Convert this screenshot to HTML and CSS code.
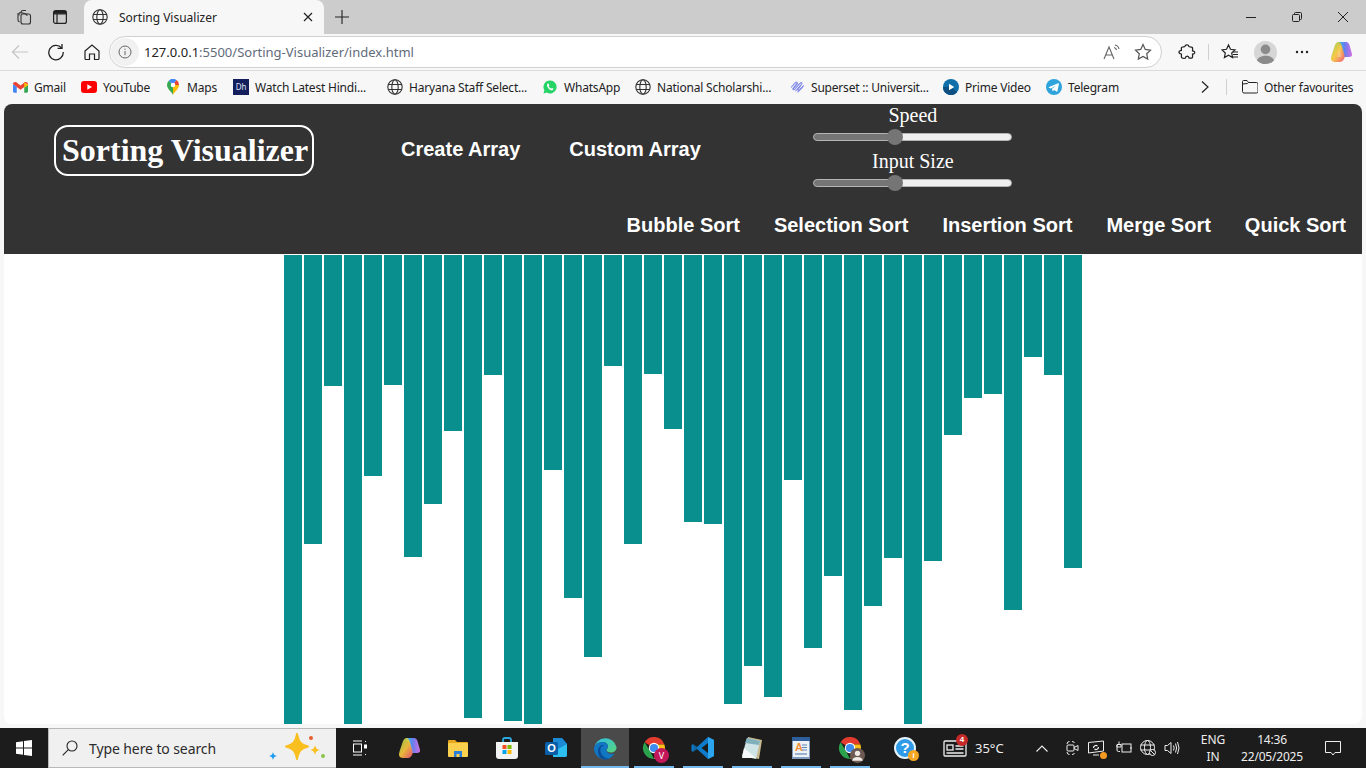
FILE: index.html
```html
<!DOCTYPE html>
<html lang="en">
<head>
  <meta charset="UTF-8">
  <meta name="viewport" content="width=device-width, initial-scale=1.0">
  <title>Sorting Visualizer</title>
  <link rel="stylesheet" href="styles.css">
</head>
<body>
  <svg class="defs" width="0" height="0">
    <defs>
      <symbol id="globe" viewBox="0 0 16 16">
        <g fill="none" stroke="#333" stroke-width="1.1">
          <circle cx="8" cy="8" r="7.2"/>
          <ellipse cx="8" cy="8" rx="3.2" ry="7.2"/>
          <path d="M1.2 5.5h13.6M1.2 10.5h13.6"/>
        </g>
      </symbol>
      <symbol id="chrome" viewBox="0 0 24 24">
        <path d="M12 12L2.6 6.2A11 11 0 0 1 22.4 8.5H12z" fill="#e33b2e"/>
        <path d="M12 23A11 11 0 0 1 2.6 6.2L8 15z" fill="#2ba24c"/>
        <path d="M22.4 8.5A11 11 0 0 1 12 23L16.5 14.5 12 8.5z" fill="#fbc116"/>
        <circle cx="12" cy="12" r="5.2" fill="#fff"/>
        <circle cx="12" cy="12" r="4.1" fill="#3f8cf0"/>
      </symbol>
    </defs>
  </svg>

  <div class="tabstrip">
    <div class="tab-tools">
      <svg class="ico16" viewBox="0 0 16 16" fill="none" stroke="#333" stroke-width="1.1"><path d="M5 4.5V3.2C5 2 6 1.5 7 1.5h3M3 6.5V5.2C3 4 4 3.2 5 3.5l5 1.5c1 .3 1 1 1 2"/><rect x="5" y="5" width="9.5" height="10" rx="2"/><path d="M2 4v7c0 1 .6 1.6 1.5 2"/></svg>
      <svg class="ico16" viewBox="0 0 16 16" fill="none" stroke="#222" stroke-width="1.2"><rect x="1.6" y="1.6" width="12.8" height="12.8" rx="2"/><path d="M1.6 4.8h12.8M5 4.8v9.6"/><path d="M2 2h12v2.6H2z" fill="#222" stroke="none"/></svg>
    </div>
    <div class="tab">
      <svg class="ico16"><use href="#globe"/></svg>
      <span class="tab-title">Sorting Visualizer</span>
      <svg class="tab-close" viewBox="0 0 10 10" stroke="#222" stroke-width="1.2"><path d="M1 1l8 8M9 1l-8 8"/></svg>
    </div>
    <svg class="tab-new" viewBox="0 0 14 14" stroke="#222" stroke-width="1.1"><path d="M7 0v14M0 7h14"/></svg>
    <div class="win-controls">
      <svg viewBox="0 0 10 10" stroke="#222"><path d="M0 5.5h10"/></svg>
      <svg viewBox="0 0 10 10" fill="none" stroke="#222"><rect x=".5" y="2.5" width="7" height="7" rx="1"/><path d="M2.5 2.5V1.5q0-1 1-1h5q1 0 1 1v5q0 1-1 1h-1"/></svg>
      <svg viewBox="0 0 10 10" stroke="#222"><path d="M0 0l10 10M10 0L0 10"/></svg>
    </div>
  </div>

  <div class="toolbar">
    <svg class="tool first" viewBox="0 0 18 18" fill="none" stroke="#c4c4c4" stroke-width="1.2"><path d="M17 9H1.5M8 2.5L1.5 9 8 15.5"/></svg>
    <svg class="tool" viewBox="0 0 18 18" fill="none" stroke="#222" stroke-width="1.3"><path d="M14.6 5A7.2 7.2 0 1 0 16.2 9"/><path d="M15 1v4.4h-4.4"/></svg>
    <svg class="tool" viewBox="0 0 18 18" fill="none" stroke="#222" stroke-width="1.2"><path d="M2 8l7-6 7 6v7.5a1 1 0 0 1-1 1h-3.5V11h-5v5.5H3a1 1 0 0 1-1-1z"/></svg>
    <div class="address">
      <span class="info"><svg viewBox="0 0 14 14" fill="none" stroke="#666"><circle cx="7" cy="7" r="6"/><path d="M7 6v4.2M7 3.6v1.2"/></svg></span>
      <span class="url"><b>127.0.0.1</b>:5500/Sorting-Visualizer/index.html</span>
      <svg class="addr-ico read" viewBox="0 0 18 16" fill="none" stroke="#666" stroke-width="1.1"><path d="M1 15L6 3l5 12M2.8 11h6.4"/><path d="M11 3.5c1.5.3 2.2 1.2 2.6 2.5M12 1c2.5.4 3.6 2 4 4"/></svg>
      <svg class="addr-ico" viewBox="0 0 18 18" fill="none" stroke="#555" stroke-width="1.2"><path d="M9 1.5l2.3 4.9 5.2.7-3.8 3.6 1 5.3L9 13.4l-4.7 2.6 1-5.3-3.8-3.6 5.2-.7z"/></svg>
    </div>
    <div class="tool-right">
      <svg class="tool-r ext" viewBox="0 0 18 18" fill="none" stroke="#222" stroke-width="1.3"><path d="M7 3.5a2.2 2.2 0 0 1 4.300 0c0 .5 3.700-.5 3.700 1.500v3c1.800 0 2.500 1 2.200 2-.3 1-1.200 1.300-2.200 1.200v3c0 1.500-1.500 1.300-3.500 1.300-.2-1.600-1-2.200-2-2.200s-1.800.8-2 2.200c-3 .3-4.200-.2-4-2 .2-1.500 0-2 0-2.300-2-.2-2.500-1-2.500-2s1-1.800 2.500-1.700V5C3 3.500 6.800 4.200 7 3.500z" transform="translate(0 .2) scale(.97)"/></svg>
      <span class="tool-sep"></span>
      <svg class="tool-r fav" viewBox="0 0 18 18" fill="none" stroke="#222" stroke-width="1.2"><path d="M7.500 2l2 4.300 4.500.6-3.300 3.100.9 4.600-4.100-2.300-4.100 2.300.9-4.600L1 6.900l4.500-.6z"/><path d="M12 9h5M12 11.500h5M11 14h6"/></svg>
      <span class="avatar"><svg viewBox="0 0 22 22" fill="#8b8b8b"><circle cx="11" cy="8" r="4.600"/><path d="M2.500 20c.5-4 4-6 8.500-6s8 2 8.500 6a11 11 0 0 1-17 0z"/></svg></span>
      <svg class="tool-r more" viewBox="0 0 14 4" fill="#222"><circle cx="2" cy="2" r="1.200"/><circle cx="7" cy="2" r="1.200"/><circle cx="12" cy="2" r="1.200"/></svg>
      <svg class="copilot" viewBox="0 0 24 24"><use href="#copilot-shape"/>
        <defs><linearGradient id="cpa" x1="0" y1="0" x2="1" y2="0"><stop offset="0" stop-color="#27c3e8"/><stop offset=".5" stop-color="#6a7df0"/><stop offset="1" stop-color="#d56fe0"/></linearGradient><linearGradient id="cpb" x1="0" y1="0" x2="1" y2="1"><stop offset="0" stop-color="#8ed04e"/><stop offset=".5" stop-color="#f7c43b"/><stop offset="1" stop-color="#f0517a"/></linearGradient></defs>
        <path d="M9 2h8c2 0 3 1.500 3.500 3l2.500 9c.5 2-1 3-3 3h-5L12 7c-.6-1.800-2-2-3-2z" fill="url(#cpa)"/>
        <path d="M6 5c1-2 2-3 3.500-3S12 3.500 12.500 5l3 10c.6 2 0 3-.5 4-1 2-2.500 3-4 3H6c-2 0-4-1-4-3s.5-3 1-5z" fill="url(#cpb)" opacity=".93"/>
        <path d="M9.500 10c1 0 1.500 1 1.800 2l1.500 5H8l1.500-5z" fill="#fff" opacity=".25"/>
      </svg>
    </div>
  </div>

  <div class="bookmarks">
    <span class="bm bm-gmail"><svg viewBox="0 0 16 12"><path d="M1 12V2l7 5.500L15 2v10h-3V6L8 9 4 6v6z" fill="#e8e8e8"/><path d="M0 3c0-2 2-3 3.500-2L8 4.500 12.500 1C14 0 16 1 16 3l-4 3-4 3-4-3z" fill="#ea4335"/><path d="M0 3v7.500C0 11.500.5 12 1.500 12H4V6z" fill="#4285f4"/><path d="M16 3v7.500c0 1-.5 1.500-1.500 1.500H12V6z" fill="#34a853"/><path d="M12 1.200L16 3v1l-4 3z" fill="#fbbc05"/></svg>Gmail</span>
    <span class="bm bm-yt"><svg viewBox="0 0 16 12"><rect width="16" height="12" rx="3" fill="#f00"/><path d="M6.300 3.300v5.400L11 6z" fill="#fff"/></svg>YouTube</span>
    <span class="bm bm-maps"><svg viewBox="0 0 12 16"><path d="M6 16C5 13 0 10 0 6a6 6 0 0 1 2-4.500L6 6z" fill="#34a853"/><path d="M2 1.500A6 6 0 0 1 9.500 1L6 6z" fill="#4285f4"/><path d="M9.500 1A6 6 0 0 1 12 6L6 6z" fill="#ea4335"/><path d="M12 6c0 4-5 7-6 10L6 6z" fill="#fbbc05"/><circle cx="6" cy="6" r="2.300" fill="#fff"/></svg>Maps</span>
    <span class="bm bm-dh"><span class="dh-logo">Dh</span>Watch Latest Hindi...</span>
    <span class="bm bm-hssc"><svg class="ico16"><use href="#globe"/></svg>Haryana Staff Select...</span>
    <span class="bm bm-wa"><svg viewBox="0 0 14 14"><path d="M7 .5a6.500 6.500 0 0 0-5.600 9.800L.5 13.500l3.300-.9A6.500 6.500 0 1 0 7 .5z" fill="#25d366"/><path d="M4.800 3.600c-.9.500-1.200 2 0 3.800 1.200 1.900 3 3.100 4.400 2.800.8-.2 1.300-1 1.200-1.500L8.900 7.900l-.8.800c-.8-.2-2-1.400-2.400-2.400l.7-.7-.7-1.900c-.4-.2-.6-.2-.9-.1z" fill="#fff"/></svg>WhatsApp</span>
    <span class="bm bm-nsp"><svg class="ico16"><use href="#globe"/></svg>National Scholarshi...</span>
    <span class="bm bm-sup"><svg viewBox="0 0 14 12" fill="none" stroke="#7f88e8" stroke-width="1"><path d="M1 6l4-4.500c1-1 2-.5 1.500.5L3 7c-.5 1 .5 1.500 1.500.5l5-5.500c1-1 2-.5 1.500.5L7.500 7.500c-.7 1 .5 1.500 1.300.7L13 4"/><path d="M2.500 7.500L7.500 2M5 9.500L10 4M7 10.500l5-5"/></svg>Superset :: Universit...</span>
    <span class="bm bm-prime"><svg viewBox="0 0 16 16"><circle cx="8" cy="8" r="8" fill="#0f6fa8"/><path d="M0 8a8 8 0 0 0 14 5.300L8 8z" fill="#0c4f80"/><path d="M6 4.800v6.400L11.200 8z" fill="#fff"/></svg>Prime Video</span>
    <span class="bm bm-tg"><svg viewBox="0 0 16 16"><circle cx="8" cy="8" r="8" fill="#2fa3db"/><path d="M3 7.900l9.200-3.600c.5-.2.800.1.700.7l-1.500 7.200c-.1.500-.5.600-.9.400L8.200 11l-1.100 1.100c-.2.200-.4.200-.5 0L6 9.800l4.300-3.400-5.400 3L3 8.700c-.4-.2-.4-.6 0-.8z" fill="#fff"/></svg>Telegram</span>
    <svg class="bm-more" viewBox="0 0 8 12" fill="none" stroke="#222" stroke-width="1.2"><path d="M1 .5L7 6l-6 5.500"/></svg>
    <span class="bm-sep"></span>
    <span class="bm bm-other"><svg viewBox="0 0 16 14" fill="none" stroke="#222"><path d="M.5 11.500v-10q0-1 1-1h3.500l1.500 2h8q1.500 0 1.500 1.500v7.500q0 1.500-1.500 1.500H2q-1.500 0-1.500-1.500z"/><path d="M.5 4l5-.5 1-1"/></svg>Other favourites</span>
  </div>

  <main class="viewport">
    <header class="site-header">
      <div class="top-row">
        <h1 class="logo">Sorting Visualizer</h1>
        <a class="nav-link create" href="#">Create Array</a>
        <a class="nav-link custom" href="#">Custom Array</a>
        <div class="sliders">
          <label for="speed">Speed</label>
          <input id="speed" type="range" min="0" max="100" value="40">
          <label for="size">Input Size</label>
          <input id="size" type="range" min="0" max="100" value="40">
        </div>
      </div>
      <nav class="sort-row">
        <a class="nav-link" href="#">Bubble Sort</a>
        <a class="nav-link" href="#">Selection Sort</a>
        <a class="nav-link" href="#">Insertion Sort</a>
        <a class="nav-link" href="#">Merge Sort</a>
        <a class="nav-link" href="#">Quick Sort</a>
      </nav>
    </header>
    <section class="bars">
      <div class="bar" style="height:480px"></div>
      <div class="bar" style="height:289px"></div>
      <div class="bar" style="height:131px"></div>
      <div class="bar" style="height:480px"></div>
      <div class="bar" style="height:221px"></div>
      <div class="bar" style="height:130px"></div>
      <div class="bar" style="height:302px"></div>
      <div class="bar" style="height:249px"></div>
      <div class="bar" style="height:176px"></div>
      <div class="bar" style="height:463px"></div>
      <div class="bar" style="height:120px"></div>
      <div class="bar" style="height:466px"></div>
      <div class="bar" style="height:480px"></div>
      <div class="bar" style="height:215px"></div>
      <div class="bar" style="height:343px"></div>
      <div class="bar" style="height:402px"></div>
      <div class="bar" style="height:111px"></div>
      <div class="bar" style="height:289px"></div>
      <div class="bar" style="height:119px"></div>
      <div class="bar" style="height:174px"></div>
      <div class="bar" style="height:267px"></div>
      <div class="bar" style="height:269px"></div>
      <div class="bar" style="height:449px"></div>
      <div class="bar" style="height:411px"></div>
      <div class="bar" style="height:442px"></div>
      <div class="bar" style="height:225px"></div>
      <div class="bar" style="height:393px"></div>
      <div class="bar" style="height:321px"></div>
      <div class="bar" style="height:455px"></div>
      <div class="bar" style="height:351px"></div>
      <div class="bar" style="height:303px"></div>
      <div class="bar" style="height:480px"></div>
      <div class="bar" style="height:306px"></div>
      <div class="bar" style="height:180px"></div>
      <div class="bar" style="height:143px"></div>
      <div class="bar" style="height:139px"></div>
      <div class="bar" style="height:355px"></div>
      <div class="bar" style="height:102px"></div>
      <div class="bar" style="height:120px"></div>
      <div class="bar" style="height:313px"></div>
    </section>
  </main>

  <footer class="taskbar">
    <div class="start"><svg viewBox="0 0 16 16" fill="#fff"><path d="M0 2.300L7 1.300v6.300H0zM8 1.100L16 0v7.600H8zM0 8.500h7v6.300L0 13.800zM8 8.500h8V16l-8-1.100z"/></svg></div>
    <div class="search">
      <svg class="search-ico" viewBox="0 0 16 16" fill="none" stroke="#222" stroke-width="1.1"><circle cx="10" cy="6" r="5"/><path d="M6.300 9.700L.7 15.300"/></svg>
      <span class="search-text">Type here to search</span>
      <svg class="sparkle" viewBox="0 0 62 30">
        <path d="M32 1c1.500 8 4 11 11 12.500C36 15 33.500 18 32 26c-1.500-8-4-11-11-12.500C28 12 30.500 9 32 1z" fill="#f9bf1f" stroke="#f9bf1f" stroke-width="2" stroke-linejoin="round"/>
        <path d="M50 12c.6 3 1.800 4.400 5 5-3.200.6-4.400 2-5 5-.6-3-1.800-4.400-5-5 3.200-.6 4.400-2 5-5z" fill="#f9bf1f"/>
        <path d="M8 19c.4 2.500 1.500 3.400 4 4-2.500.5-3.600 1.500-4 4-.4-2.500-1.500-3.500-4-4 2.500-.6 3.600-1.500 4-4z" fill="#1f9cf0"/>
        <circle cx="46" cy="5" r="2" fill="#e8602c"/><circle cx="58" cy="23" r="2" fill="#8bc34a"/>
      </svg>
    </div>
    <div class="apps">
      <span class="app"><svg class="task-view" viewBox="0 0 16 16" fill="none" stroke="#fff"><path d="M1 1h9M1 15h9"/><rect x="1.500" y="4" width="8" height="8"/><rect x="12.500" y="5" width="2" height="3" fill="#fff"/><path d="M13.500 1v1M13.500 14v1"/></svg></span>
      <span class="app"><svg viewBox="0 0 24 24">
        <path d="M9 2h8c2 0 3 1.500 3.500 3l2.500 9c.5 2-1 3-3 3h-5L12 7c-.6-1.800-2-2-3-2z" fill="url(#cpa)"/>
        <path d="M6 5c1-2 2-3 3.500-3S12 3.500 12.500 5l3 10c.6 2 0 3-.5 4-1 2-2.500 3-4 3H6c-2 0-4-1-4-3s.5-3 1-5z" fill="url(#cpb)" opacity=".93"/></svg></span>
      <span class="app"><svg viewBox="0 0 24 24"><path d="M2 5q0-1 1-1h6l2 2h10q1 0 1 1v2H2z" fill="#e9a71c"/><rect x="2" y="7" width="20" height="14" rx="1" fill="#fbd04e"/><path d="M8 21v-6h8v6h-2.500v-3h-3v3z" fill="#2b7fd6"/></svg></span>
      <span class="app"><svg viewBox="0 0 24 24"><path d="M8 6V4q0-2 2-2h4q2 0 2 2v2" fill="none" stroke="#2aa8e0" stroke-width="1.800"/><path d="M1 6h22v14q0 3-3 3H4q-3 0-3-3z" fill="#f3f3f3"/><rect x="7.500" y="9" width="4" height="4" fill="#f25022"/><rect x="12.500" y="9" width="4" height="4" fill="#7fba00"/><rect x="7.500" y="14" width="4" height="4" fill="#00a4ef"/><rect x="12.500" y="14" width="4" height="4" fill="#ffb900"/></svg></span>
      <span class="app"><svg viewBox="0 0 24 24"><path d="M9 2h9l5 6v11q0 2-2 2H9z" fill="#0f6cbd"/><path d="M9 11l14-3v11q0 2-2 2H9z" fill="#2bc0f0"/><path d="M23 8L14 13 9 9V2h9z" fill="#1d8ad6"/><rect x="1" y="6" width="13" height="13" rx="1.500" fill="#0a5ea8"/><text class="o-letter" x="7.500" y="16.300">O</text></svg></span>
      <span class="app active"><svg viewBox="0 0 24 24"><defs><linearGradient id="edg" x1="0" y1="0" x2="1" y2="1"><stop offset="0" stop-color="#2fc0e8"/><stop offset="1" stop-color="#58d27a"/></linearGradient></defs><path d="M1 12A11.500 11.500 0 0 1 23.500 11c.2 3-2 5.500-5.500 5.500-2.500 0-4.500-1-4.500-2.500 0-1.500 1.500-1.500 1.500-3.500C15 7.500 12 5.500 8.500 6 4.500 6.500 1.500 9 1 12z" fill="url(#edg)"/><path d="M1 12C1.500 9 4.500 6.500 8.500 6 12 5.500 15 7.500 15 10.500c0 2-1.500 2-1.500 3.500 0 2 2 4 5 4 1 0 2-.2 3-.8A11.500 11.500 0 0 1 12 23.500 11 11 0 0 1 1 12z" fill="#1277c2"/><path d="M6 20C4 15 5 11 8 9.500c1.500-.7 2.500-.5 3 0-3 .3-4 3-3.500 6 .6 3.500 4 7 8.500 7.300-4 1.500-8 .5-10-2.800z" fill="#0b4d96"/></svg></span>
      <span class="app"><span class="badged"><svg viewBox="0 0 24 24"><use href="#chrome"/></svg><span class="badge-v">V</span></span></span>
      <span class="app"><svg viewBox="0 0 24 24"><path d="M17 1l6 3v16l-6 3L6 13l-4 3-1.500-1v-6L2 8l4 3z" fill="#0d7bc9"/><path d="M17 1l6 3v16l-6 3z" fill="#2aa5ee"/><path d="M17 7L10.500 12 17 17z" fill="#1c1c1c"/><path d="M1 9l1-1 4.500 4L2 16l-1-1 2.500-3z" fill="#1c1c1c" opacity=".25"/></svg></span>
      <span class="app"><svg viewBox="0 0 24 24"><path d="M8 1l14 3-3 19L3 20z" fill="#c9b98f"/><path d="M7 2l13 3-4 18L2 20z" fill="#cfe4e6"/><path d="M7 2l13 3-1 4L5 7z" fill="#7fb0bb"/><path d="M4 12l12 10H2z" fill="#f4f8f8"/></svg></span>
      <span class="app"><svg viewBox="0 0 24 24"><rect x="3" y="1" width="18" height="22" fill="#7f9cc0"/><rect x="4" y="3" width="16" height="18" fill="#eef2f7"/><rect x="3" y="1" width="18" height="4" fill="#2e5f9a"/><text class="a-letter" x="6" y="15">A</text><path d="M13 9h5M13 11.500h5M13 14h5" stroke="#5a86b5"/><path d="M6 18h12" stroke="#7f9cc0" stroke-width="1.500"/></svg></span>
      <span class="app"><span class="badged"><svg viewBox="0 0 24 24"><use href="#chrome"/></svg><span class="badge-user"><svg viewBox="0 0 14 14" fill="#f1e9e4"><circle cx="7" cy="5" r="2.500"/><path d="M2 12c.5-2.500 2.500-3.500 5-3.500s4.500 1 5 3.500z"/></svg></span></span></span>
    </div>
    <div class="tray">
      <span class="help"><span class="help-q">?</span><span class="help-i">i</span></span>
      <span class="news"><svg viewBox="0 0 24 18" fill="none" stroke="#eee" stroke-width="1.300"><rect x="1" y="2" width="22" height="15" rx="1"/><rect x="4" y="6" width="6" height="5"/><path d="M3.500 14h17M12.500 7h8M12.500 10h8"/></svg><span class="news-badge">4</span></span>
      <span class="temp">35°C</span>
      <svg class="caret" viewBox="0 0 12 7" fill="none" stroke="#eee" stroke-width="1.100"><path d="M.5 6.500L6 1l5.500 5.500"/></svg>
      <svg class="t-ico" viewBox="0 0 16 16" fill="none" stroke="#eee"><path d="M3 4q0-2.500 2.500-2.500M3 12q0 2.500 2.500 2.500M8 1.500q2 0 2.500 1.500M8 14.500q2 0 2.500-1.500"/><rect x="3" y="5" width="7" height="6" rx="1"/><path d="M10 7.500l4-2v5l-4-2"/></svg>
      <span class="t-box"><svg class="t-ico" viewBox="0 0 16 16" fill="none" stroke="#eee"><path d="M.5 2.500l15-1.500v10l-15 2zM5 15h6"/><path d="M5.500 8a2.500 2.500 0 0 1 4-2M10.500 7a2.500 2.500 0 0 1-4 2" stroke-width="1.200"/></svg><span class="t-dot"></span></span>
      <svg class="t-ico" viewBox="0 0 16 16" fill="none" stroke="#eee"><rect x="6" y="4" width="9" height="8"/><path d="M15 7v2M1 5v5q0 1.500 1.500 1.500H4M3 1.500v3M1 4.500h4v2.500H1z"/></svg>
      <svg class="t-ico" viewBox="0 0 16 16" fill="none" stroke="#eee"><circle cx="7.500" cy="7.500" r="7"/><ellipse cx="7.500" cy="7.500" rx="3" ry="7"/><path d="M.5 5h14M.5 10h14"/><circle cx="12.500" cy="12.500" r="3" fill="#1c1c1c"/><path d="M10.500 10.500l4 4"/></svg>
      <svg class="t-ico" viewBox="0 0 16 16" fill="none" stroke="#eee"><path d="M1 5.500h2.500L7 2.500v11l-3.500-3H1zM9.500 5.500q1.300 2.500 0 5M11.500 3.500q2.200 4.500 0 9M13.500 2q3 6 0 12"/></svg>
      <span class="lang">ENG<br>IN</span>
      <span class="clock">14:36<br>22/05/2025</span>
      <svg class="notif" viewBox="0 0 16 15" fill="none" stroke="#eee"><path d="M.5.500h15v11H10l-2 2.500-2-2.500H.5z"/></svg>
    </div>
  </footer>
</body>
</html>
```

FILE: styles.css
```css
* {
  box-sizing: border-box;
}
html, body {
  margin: 0;
  height: 100%;
}
body {
  width: 1366px;
  height: 768px;
  overflow: hidden;
  display: flex;
  flex-direction: column;
  background-color: #f7f7f7;
  font-family: "Noto Sans", "Open Sans", sans-serif;
  color: #222;
}
.defs {
  position: absolute;
}
svg {
  display: block;
  flex: none;
}
.ico16 {
  width: 16px;
  height: 16px;
}

/* browser tab strip */
.tabstrip {
  height: 34px;
  flex: none;
  display: flex;
  align-items: center;
  background-color: #cccccc;
}
.tab-tools {
  width: 84px;
  padding-left: 16px;
  display: flex;
  gap: 20px;
}
.tab {
  width: 240px;
  height: 34px;
  display: flex;
  align-items: center;
  padding: 0 11px 0 6px;
  background-color: #f7f7f7;
  border-radius: 8px 8px 0 0;
}
.tab .ico16 {
  margin-left: 2px;
}
.tab-title {
  margin-left: 11px;
  font-size: 12px;
  flex: 1;
}
.tab-close {
  width: 10px;
  height: 10px;
}
.tab-new {
  width: 14px;
  height: 14px;
  margin-left: 11px;
}
.win-controls {
  margin-left: auto;
  display: flex;
  gap: 36px;
  padding-right: 18px;
}
.win-controls svg {
  width: 10px;
  height: 10px;
}

/* address bar */
.toolbar {
  height: 36px;
  flex: none;
  display: flex;
  align-items: center;
  padding-left: 11px;
}
.tool {
  width: 18px;
  height: 18px;
  margin-right: 18px;
}
.address {
  width: 1053px;
  height: 32px;
  margin-left: -10px;
  display: flex;
  align-items: center;
  background-color: #fff;
  border: 1px solid #d0d0d0;
  border-radius: 16px;
}
.info {
  width: 28px;
  height: 28px;
  margin-left: 1px;
  display: flex;
  align-items: center;
  justify-content: center;
  background-color: #f1f1f1;
  border-radius: 50%;
}
.info svg {
  width: 14px;
  height: 14px;
}
.url {
  margin-left: 5px;
  flex: 1;
  font-size: 13px;
  color: #5f6b7a;
}
.url b {
  font-weight: 400;
  color: #222;
}
.addr-ico {
  width: 18px;
  height: 18px;
  margin-right: 9px;
}
.addr-ico.read {
  margin-right: 13px;
}
.tool-right {
  display: flex;
  align-items: center;
  padding-left: 16px;
}
.tool-r {
  width: 18px;
  height: 18px;
}
.tool-sep {
  width: 1px;
  height: 16px;
  margin: 0 12px 0 12px;
  background-color: #d0d0d0;
}
.avatar {
  width: 23px;
  height: 23px;
  margin-left: 15px;
  border-radius: 50%;
  background-color: #d6d6d6;
  overflow: hidden;
}
.avatar svg {
  width: 23px;
  height: 23px;
}
.tool-r.more {
  width: 14px;
  height: 4px;
  margin-left: 18px;
}
.copilot {
  width: 24px;
  height: 24px;
  margin-left: 20px;
}

/* bookmarks */
.bookmarks {
  height: 34px;
  flex: none;
  display: flex;
  align-items: center;
  border-top: 1px solid #dcdcdc;
  font-size: 12px;
  letter-spacing: -.2px;
  padding-left: 13px;
  padding-bottom: 1px;
}
.bm {
  display: flex;
  align-items: center;
  gap: 6px;
  white-space: nowrap;
}
.bm-gmail svg {
  width: 15px;
  height: 12px;
}
.bm-gmail {
  width: 68px;
}
.bm-yt svg {
  width: 16px;
  height: 12px;
}
.bm-yt {
  width: 86px;
}
.bm-maps svg {
  width: 12px;
  height: 16px;
}
.bm-maps {
  width: 66px;
  gap: 8px;
}
.bm-dh {
  width: 154px;
}
.dh-logo {
  width: 16px;
  height: 16px;
  background-color: #141e5c;
  color: #dfe3f5;
  font-size: 8px;
  line-height: 16px;
  text-align: center;
}
.bm-hssc {
  width: 156px;
}
.bm-wa svg {
  width: 14px;
  height: 14px;
}
.bm-wa {
  width: 92px;
  gap: 7px;
}
.bm-nsp {
  width: 155px;
}
.bm-sup svg {
  width: 15px;
  height: 13px;
}
.bm-sup {
  width: 153px;
}
.bm-prime svg, .bm-tg svg {
  width: 16px;
  height: 16px;
}
.bm-prime {
  width: 103px;
}
.bm-tg {
  width: 155px;
}
.bm-more {
  width: 8px;
  height: 12px;
}
.bm-sep {
  width: 1px;
  height: 16px;
  margin: 0 15px 0 17px;
  background-color: #d0d0d0;
}
.bm-other svg {
  width: 16px;
  height: 14px;
}

/* the page itself */
.viewport {
  height: 620px;
  flex: none;
  margin: 0 4px 4px;
  background-color: #fff;
  border-radius: 8px;
  overflow: hidden;
  font-family: "Liberation Serif", serif;
}
.site-header {
  height: 150px;
  background-color: #333333;
  color: #fff;
}
.top-row {
  height: 92px;
  display: flex;
  align-items: flex-start;
  padding-left: 50px;
}
.logo {
  margin: 21px 0 0;
  padding: 0 6px;
  height: 51px;
  width: 260px;
  line-height: 47px;
  font-size: 32px;
  font-weight: 700;
  white-space: nowrap;
  border: 2px solid #fff;
  border-radius: 14px;
}
.nav-link {
  color: #fff;
  font-family: "Liberation Sans", Arial, sans-serif;
  font-size: 20px;
  font-weight: 700;
  line-height: 23px;
  text-decoration: none;
}
.create {
  margin: 34px 0 0 87px;
}
.custom {
  margin: 34px 0 0 49px;
}
.sliders {
  width: 200px;
  margin-left: 112px;
  display: flex;
  flex-direction: column;
  align-items: center;
  font-size: 20px;
  line-height: 23px;
}
.sliders input {
  appearance: none;
  -webkit-appearance: none;
  display: block;
  width: 199px;
  height: 20px;
  margin: 0 0 3px;
  background: transparent;
}
.sliders input::-webkit-slider-runnable-track {
  height: 8px;
  border-radius: 4px;
  border: 1px solid #b4b4b4;
  background: linear-gradient(to right, #757575 41%, #efefef 41%);
}
.sliders input::-webkit-slider-thumb {
  -webkit-appearance: none;
  width: 16px;
  height: 16px;
  margin-top: -5px;
  border-radius: 50%;
  background-color: #757575;
}
.sort-row {
  display: flex;
  justify-content: flex-end;
  gap: 34px;
  padding: 18px 16px 0 0;
}

.bars {
  display: flex;
  justify-content: center;
  align-items: flex-start;
  gap: 2px;
  padding-top: 1px;
}
.bar {
  width: 18px;
  background-color: #0a8f8f;
}

/* windows taskbar */
.taskbar {
  height: 40px;
  flex: none;
  display: flex;
  align-items: stretch;
  background-color: #1c1c1c;
}
.start {
  width: 48px;
  display: flex;
  align-items: center;
  justify-content: center;
}
.start svg {
  width: 16px;
  height: 16px;
}
.search {
  width: 288px;
  display: flex;
  align-items: center;
  padding-left: 13px;
  background-color: #f0f0f0;
  border: 1px solid #b8b8b8;
  border-width: 1px 0 1px 1px;
}
.search-ico {
  width: 16px;
  height: 16px;
}
.search-text {
  margin-left: 11px;
  font-size: 14px;
  letter-spacing: -.1px;
  color: #2b2b2b;
  flex: 1;
}
.sparkle {
  width: 62px;
  height: 30px;
  margin-right: 9px;
}
.apps {
  display: flex;
  gap: 1px;
  padding-left: 0;
}
.app {
  width: 48px;
  display: flex;
  align-items: center;
  justify-content: center;
  position: relative;
}
.app::after {
  content: "";
  position: absolute;
  left: 4px;
  right: 4px;
  bottom: 0;
  height: 2px;
  background-color: #76b9ed;
}
.app:nth-child(-n+5)::after {
  display: none;
}
.app svg {
  width: 24px;
  height: 24px;
}
.app svg.task-view {
  width: 16px;
  height: 16px;
}
.app.active {
  background-color: #4a4a4a;
}
.app.active::after {
  left: 0;
  right: 0;
}
.o-letter {
  fill: #fff;
  font: 700 11px "Liberation Sans", sans-serif;
  text-anchor: middle;
}
.a-letter {
  fill: #f0913a;
  font: 700 11px "Liberation Sans", sans-serif;
}
.badged {
  position: relative;
  display: block;
  width: 24px;
  height: 24px;
}
.badge-v, .badge-user {
  position: absolute;
  right: -3px;
  bottom: -3px;
  width: 15px;
  height: 15px;
  border-radius: 50%;
  font-size: 9px;
  line-height: 15px;
  text-align: center;
  color: #fff;
}
.badge-v {
  background-color: #c2185b;
}
.badge-user {
  background-color: #6d5a52;
}
.app .badge-user svg {
  width: 15px;
  height: 15px;
}
.tray {
  margin-left: auto;
  display: flex;
  align-items: center;
  color: #eee;
  position: relative;
}
.help {
  position: relative;
  width: 22px;
  height: 22px;
  margin-right: 27px;
  border-radius: 50%;
  background-color: #2f9be8;
  border: 2px solid #e8f4fc;
  text-align: center;
}
.help-q {
  display: block;
  color: #fff;
  font: 700 15px/18px "Liberation Sans", sans-serif;
}
.help-i {
  position: absolute;
  right: -5px;
  bottom: -4px;
  width: 11px;
  height: 11px;
  border-radius: 50%;
  background-color: #f5a623;
  color: #fff;
  font: 700 8px/11px "Liberation Sans", sans-serif;
}
.news {
  position: relative;
  margin-right: 8px;
}
.news svg {
  width: 24px;
  height: 18px;
}
.news-badge {
  position: absolute;
  top: -5px;
  right: -1px;
  width: 12px;
  height: 12px;
  border-radius: 50%;
  background-color: #c62828;
  color: #fff;
  text-align: center;
  font: 700 8px/12px "Liberation Sans", sans-serif;
}
.temp {
  font-size: 13px;
  width: 61px;
}
.caret {
  width: 12px;
  height: 7px;
  margin-right: 12px;
}
.t-ico {
  width: 16px;
  height: 16px;
  margin: 0 4px;
}
.t-box {
  position: relative;
  margin: 0;
}
.t-dot {
  position: absolute;
  right: 1px;
  bottom: -3px;
  width: 7px;
  height: 7px;
  border-radius: 50%;
  background-color: #f59a23;
}
.tray > .t-ico, .t-box {
  margin-right: 4px;
}
.lang {
  width: 46px;
  margin-left: 6px;
  font-size: 12px;
  line-height: 17px;
  text-align: center;
}
.clock {
  width: 72px;
  font-size: 12px;
  line-height: 17px;
  text-align: center;
  letter-spacing: -.2px;
}
.notif {
  width: 16px;
  height: 15px;
  margin: 0 25px 0 17px;
}
```
